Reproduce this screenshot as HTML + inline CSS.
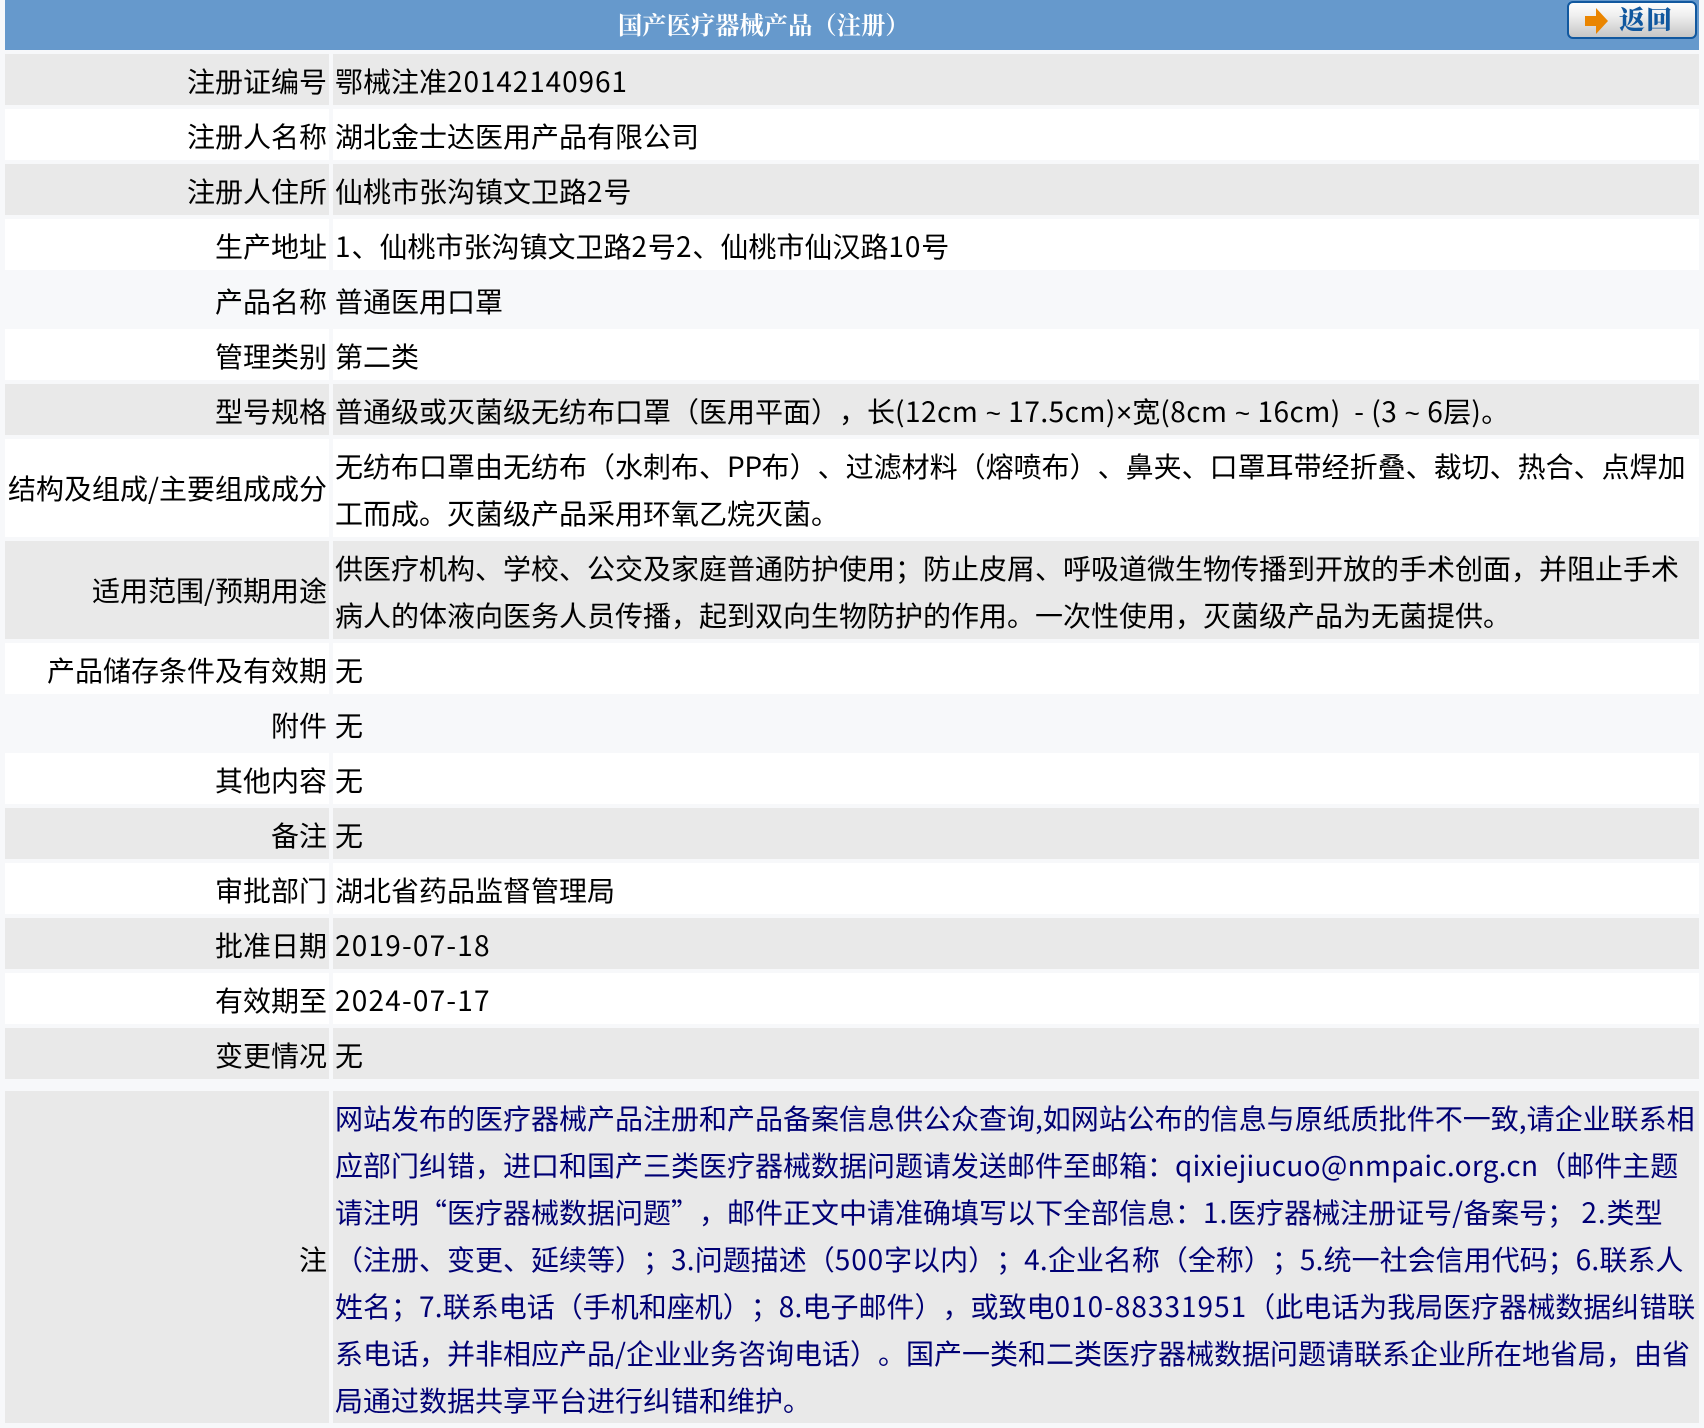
<!DOCTYPE html>
<html lang="zh-CN">
<head>
<meta charset="utf-8">
<title>国产医疗器械产品（注册）</title>
<style>
html,body{margin:0;padding:0;width:1704px;height:1428px;overflow:hidden;background:#f7f8fa;}
body{position:relative;font-family:"Noto Sans CJK SC","Microsoft YaHei",sans-serif;font-size:28px;color:#000;text-spacing-trim:space-all;}
.head{position:absolute;left:5px;top:0;width:1694px;height:50px;background:#6699cc;}
.title{position:absolute;left:618px;top:0;height:50px;line-height:48px;color:#fff;font-family:"Noto Serif CJK SC",serif;font-weight:700;font-size:24.3px;white-space:nowrap;}
.btn{position:absolute;left:1567px;top:1px;width:126px;height:34px;border:2px solid #11589f;border-radius:6px;background:linear-gradient(#fdfdfd,#f0f0f0 35%,#c6c6c6);}
.btn svg{position:absolute;left:16px;top:5px;}
.btn span{position:absolute;left:50px;top:0;line-height:32px;font-size:26px;font-weight:900;color:#11589f;letter-spacing:1px;font-family:"Noto Serif CJK SC",serif;white-space:nowrap;}
.l,.v{position:absolute;box-sizing:border-box;white-space:nowrap;}
.l{left:5px;width:324px;padding:2px 2px 0 0;text-align:right;}
.v{left:333px;width:1366px;padding:4px 0 0 2px;line-height:47px;}
.g{background:#e9e9e9;}
.w{background:#fff;}
.n{color:#000074;}
b{font-weight:400;letter-spacing:.9px;}
b.d{letter-spacing:1.2px;}
b.e{letter-spacing:1px;}
b.m{letter-spacing:.27px;}
b.c{letter-spacing:.5px;}
b.p{letter-spacing:-.4px;}
b.s{letter-spacing:.2px;}
i{font-style:normal;font-family:"Liberation Sans",sans-serif;}
i.t{display:inline-block;width:30px;text-align:center;font-size:26px;letter-spacing:0;}
i.x{letter-spacing:0;}
</style>
</head>
<body>
<div class="head"></div>
<div class="title">国产医疗器械产品（注册）</div>
<div class="btn"><svg width="24" height="26" viewBox="0 0 24 26"><path d="M0 8H11V0L23 13L11 26V18H0Z" fill="#ea8500"/></svg><span>返回</span></div>

<div class="l g" style="top:54px;height:51px;line-height:51px">注册证编号</div><div class="v g" style="top:54px;height:51px">鄂械注准<b>20142140961</b></div>
<div class="l w" style="top:109px;height:51px;line-height:51px">注册人名称</div><div class="v w" style="top:109px;height:51px">湖北金士达医用产品有限公司</div>
<div class="l g" style="top:164px;height:51px;line-height:51px">注册人住所</div><div class="v g" style="top:164px;height:51px">仙桃市张沟镇文卫路<b>2</b>号</div>
<div class="l w" style="top:219px;height:51px;line-height:51px">生产地址</div><div class="v w" style="top:219px;height:51px"><b>1</b>、仙桃市张沟镇文卫路<b>2</b>号<b>2</b>、仙桃市仙汉路<b>10</b>号</div>
<div class="l" style="top:274px;height:51px;line-height:51px">产品名称</div><div class="v" style="top:274px;height:51px">普通医用口罩</div>
<div class="l w" style="top:329px;height:51px;line-height:51px">管理类别</div><div class="v w" style="top:329px;height:51px">第二类</div>
<div class="l g" style="top:384px;height:51px;line-height:51px">型号规格</div><div class="v g" style="top:384px;height:51px">普通级或灭菌级无纺布口罩（医用平面），长<b class="c">(12cm<i class="t">~</i>17.5cm)<i class="x">×</i></b>宽<b class="c">(8cm<i class="t">~</i>16cm)&nbsp; - (3<i class="t">~</i>6</b>层<b class="c">)</b>。</div>
<div class="l w" style="top:439px;height:98px;line-height:98px;padding-top:0">结构及组成/主要组成成分</div><div class="v w" style="top:439px;height:98px">无纺布口罩由无纺布（水刺布、<b class="p">PP</b>布）、过滤材料（熔喷布）、鼻夹、口罩耳带经折叠、裁切、热合、点焊加<br>工而成。灭菌级产品采用环氧乙烷灭菌。</div>
<div class="l g" style="top:541px;height:98px;line-height:98px;padding-top:0">适用范围/预期用途</div><div class="v g" style="top:541px;height:98px">供医疗机构、学校、公交及家庭普通防护使用；防止皮屑、呼吸道微生物传播到开放的手术创面，并阻止手术<br>病人的体液向医务人员传播，起到双向生物防护的作用。一次性使用，灭菌级产品为无菌提供。</div>
<div class="l w" style="top:643px;height:51px;line-height:51px">产品储存条件及有效期</div><div class="v w" style="top:643px;height:51px">无</div>
<div class="l" style="top:698px;height:51px;line-height:51px">附件</div><div class="v" style="top:698px;height:51px">无</div>
<div class="l w" style="top:753px;height:51px;line-height:51px">其他内容</div><div class="v w" style="top:753px;height:51px">无</div>
<div class="l g" style="top:808px;height:51px;line-height:51px">备注</div><div class="v g" style="top:808px;height:51px">无</div>
<div class="l w" style="top:863px;height:51px;line-height:51px">审批部门</div><div class="v w" style="top:863px;height:51px">湖北省药品监督管理局</div>
<div class="l g" style="top:918px;height:51px;line-height:51px">批准日期</div><div class="v g" style="top:918px;height:51px"><b class="d">2019-07-18</b></div>
<div class="l w" style="top:973px;height:51px;line-height:51px">有效期至</div><div class="v w" style="top:973px;height:51px"><b class="d">2024-07-17</b></div>
<div class="l g" style="top:1028px;height:51px;line-height:51px">变更情况</div><div class="v g" style="top:1028px;height:51px">无</div>

<div class="l g" style="top:1091px;height:332px;line-height:332px">注</div>
<div class="v g n" style="top:1091px;height:332px">网站发布的医疗器械产品注册和产品备案信息供公众查询,如网站公布的信息与原纸质批件不一致,请企业联系相<br>应部门纠错，进口和国产三类医疗器械数据问题请发送邮件至邮箱：<b class="m">qixiejiucuo@nmpaic.org.cn</b>（邮件主题<br>请注明“医疗器械数据问题”，邮件正文中请准确填写以下全部信息：<b>1.</b>医疗器械注册证号/备案号； <b>2.</b>类型<br>（注册、变更、延续等）；<b class="s">3.</b>问题描述（<b>500</b>字以内）；<b class="s">4.</b>企业名称（全称）；<b class="s">5.</b>统一社会信用代码；<b class="s">6.</b>联系人<br>姓名；<b class="s">7.</b>联系电话（手机和座机）；<b class="s">8.</b>电子邮件），或致电<b class="e">010-88331951</b>（此电话为我局医疗器械数据纠错联<br>系电话，并非相应产品/企业业务咨询电话）。国产一类和二类医疗器械数据问题请联系企业所在地省局，由省<br>局通过数据共享平台进行纠错和维护。</div>
</body>
</html>
